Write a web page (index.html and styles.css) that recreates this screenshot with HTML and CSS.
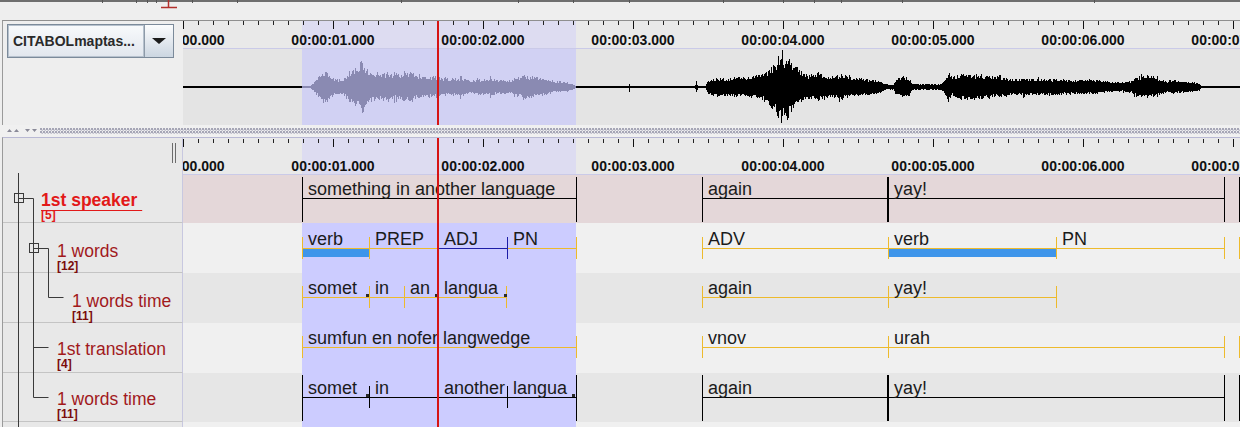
FILE: index.html
```html
<!DOCTYPE html>
<html lang="en">
<head>
<meta charset="utf-8">
<title>Timeline viewer</title>
<link rel="stylesheet" href="styles.css">
</head>
<body>
<div class="app">
  <div class="topstrip">
    <svg width="1240" height="20" viewBox="0 0 1240 20">
      <path class="topline" d="M0 1H1240"/>
      <path class="topticks" d="M102.5 0V3M136.5 0V3M147.5 0V3M156.5 0V3M192.5 0V3M237.5 0V3M401.5 0V3M518.5 0V3M573.5 0V3M629.5 0V3M723.5 0V3M783.5 0V3M814.5 0V3M841.5 0V3M902.5 0V3M1094.5 0V3"/>
      <path class="topmark" d="M168.5 0V7M161 7.5H177"/>
    </svg>
  </div>

  <section class="wave-panel">
    <div class="wave-side">
      <div class="combo">
        <span class="combo-text">CITABOLmaptas...</span>
        <span class="combo-btn"><i class="tri"></i></span>
      </div>
    </div>
    <div class="wave-main">
      <div class="ruler ruler-top">
        <span class="tl" style="left:0px">00:00:00.000</span>
        <span class="tl" style="left:150px">00:00:01.000</span>
        <span class="tl" style="left:300px">00:00:02.000</span>
        <span class="tl" style="left:450px">00:00:03.000</span>
        <span class="tl" style="left:600px">00:00:04.000</span>
        <span class="tl" style="left:750px">00:00:05.000</span>
        <span class="tl" style="left:900px">00:00:06.000</span>
        <span class="tl" style="left:1050px">00:00:07.000</span>
      </div>
      <div class="wave">
        <svg id="wave" width="1057" height="76" viewBox="0 0 1057 76">
          <rect x="0" y="37" width="119" height="2" fill="#000"/>
          <rect x="119" y="37" width="274" height="2" fill="#8a8ab2"/>
          <rect x="393" y="37" width="664" height="2" fill="#000"/>
          <g id="wave-bars"></g>
        </svg>
      </div>
      <div class="cross cross-top"></div>
    </div>
  </section>

  <div class="splitter">
    <svg class="split-arrows" width="40" height="12" viewBox="0 0 40 12">
      <path d="M7 7L9.5 4L12 7ZM14 7L16.5 4L19 7Z"/>
      <path d="M25 4H30L27.5 7ZM32 4H37L34.5 7Z"/>
    </svg>
    <div class="split-dots"></div>
  </div>

  <section class="tiers">
    <div class="trow thead">
      <div class="tname"><span class="grip"></span></div>
      <div class="track ruler ruler-low">
        <span class="tl" style="left:0px">00:00:00.000</span>
        <span class="tl" style="left:150px">00:00:01.000</span>
        <span class="tl" style="left:300px">00:00:02.000</span>
        <span class="tl" style="left:450px">00:00:03.000</span>
        <span class="tl" style="left:600px">00:00:04.000</span>
        <span class="tl" style="left:750px">00:00:05.000</span>
        <span class="tl" style="left:900px">00:00:06.000</span>
        <span class="tl" style="left:1050px">00:00:07.000</span>
      </div>
    </div>

    <div class="trow r1">
      <div class="tname active lv0"><span class="nm">1st speaker&nbsp;</span><span class="ct">[5]</span></div>
      <div class="track">
        <div class="seg lf rf" style="left:119px;width:275px"><span class="t">something in another language</span></div>
        <div class="seg lf rf" style="left:519px;width:186px"><span class="t">again</span></div>
        <div class="seg lf rf" style="left:705px;width:337px"><span class="t">yay!</span></div>
        <div class="seg lf" style="left:1056px;width:200px"></div>
      </div>
    </div>

    <div class="trow r2">
      <div class="tname lv1"><span class="nm">1 words</span><span class="ct">[12]</span></div>
      <div class="track sel-bg">
        <div class="seg g lt" style="left:119px;width:67px"><span class="bar"></span><span class="t">verb</span></div>
        <div class="seg g lt" style="left:186px;width:69px"><span class="t">PREP</span></div>
        <div class="seg g lt rt" style="left:324px;width:70px"><span class="t">PN</span></div>
        <div class="seg b lt rt" style="left:255px;width:70px"><span class="t">ADJ</span></div>
        <div class="seg g lt" style="left:519px;width:186px"><span class="t">ADV</span></div>
        <div class="seg g lt" style="left:705px;width:168px"><span class="bar"></span><span class="t">verb</span></div>
        <div class="seg g lt rt" style="left:873px;width:169px"><span class="t">PN</span></div>
        <div class="seg g lt" style="left:1056px;width:200px"></div>
      </div>
    </div>

    <div class="trow r3">
      <div class="tname lv2"><span class="nm">1 words time</span><span class="ct">[11]</span></div>
      <div class="track sel-bg">
        <div class="seg g lt" style="left:119px;width:67px"><span class="t">somet</span></div>
        <div class="seg g lt" style="left:186px;width:35px"><span class="t">in</span></div>
        <div class="seg g lt" style="left:221px;width:34px"><span class="t">an</span></div>
        <div class="seg g lt rt" style="left:255px;width:69px"><span class="t">langua</span></div>
        <span class="sq" style="left:183px"></span>
        <span class="sq" style="left:252px"></span>
        <span class="sq" style="left:321px"></span>
        <div class="seg g lt" style="left:519px;width:186px"><span class="t">again</span></div>
        <div class="seg g lt rt" style="left:705px;width:169px"><span class="t">yay!</span></div>
      </div>
    </div>

    <div class="trow r4">
      <div class="tname lv1"><span class="nm">1st translation</span><span class="ct">[4]</span></div>
      <div class="track sel-bg">
        <div class="seg g lt rt" style="left:119px;width:275px"><span class="t">sumfun en nofer langwedge</span></div>
        <div class="seg g lt" style="left:519px;width:186px"><span class="t">vnov</span></div>
        <div class="seg g lt rt" style="left:705px;width:337px"><span class="t">urah</span></div>
        <div class="seg g lt" style="left:1056px;width:200px"></div>
      </div>
    </div>

    <div class="trow r5">
      <div class="tname lv1"><span class="nm">1 words time</span><span class="ct">[11]</span></div>
      <div class="track sel-bg">
        <div class="seg lf" style="left:119px;width:67px"><span class="t">somet</span></div>
        <div class="seg lt" style="left:186px;width:69px"><span class="t">in</span></div>
        <div class="seg lt" style="left:255px;width:69px"><span class="t">another</span></div>
        <div class="seg lt rf" style="left:324px;width:70px"><span class="t">langua</span></div>
        <span class="sq" style="left:183px"></span>
        <span class="sq" style="left:389px"></span>
        <div class="seg lf rf" style="left:519px;width:186px"><span class="t">again</span></div>
        <div class="seg lf rf" style="left:705px;width:337px"><span class="t">yay!</span></div>
        <div class="seg lf" style="left:1056px;width:200px"></div>
      </div>
    </div>

    <div class="trow fill">
      <div class="tname"></div>
      <div class="track sel-bg"></div>
    </div>

    <svg class="tree" width="180" height="289" viewBox="3 138 180 289">
      <path d="M18.5 173V427M18.5 198.5H33.5M33.5 198.5V397.5H48.5M33.5 347.5H48.5M33.5 248.5H48.5V297.5H63.5"/>
      <rect x="14.5" y="193.5" width="9" height="9"/>
      <rect x="29.5" y="243.5" width="9" height="9"/>
    </svg>
    <div class="cross cross-low"></div>
  </section>
</div>
<script src="script.js"></script>
</body>
</html>
```

FILE: styles.css
```css
:root {
  --sl: 119px;
  --sr: 393px;
}

* { box-sizing: border-box; }

html, body { margin: 0; padding: 0; }

body {
  width: 1240px;
  height: 427px;
  overflow: hidden;
  background: #eeeeee;
  font-family: "Liberation Sans", Arial, sans-serif;
  color: #111;
}

.app { display: flex; flex-direction: column; height: 427px; }

/* ---------- top strip ---------- */
.topstrip { height: 20px; flex: none; }
.topstrip svg { display: block; }
.topline { stroke: #6e6e6e; stroke-width: 2; fill: none; }
.topticks { stroke: #555; stroke-width: 1; fill: none; }
.topmark { stroke: #b3302c; stroke-width: 1.5; fill: none; }

/* ---------- waveform panel ---------- */
.wave-panel {
  flex: none;
  display: flex;
  height: 105px;
  margin-left: 2px;
  border-top: 1px solid #8f8f8f;
  border-left: 1px solid #9a9a9a;
}

.wave-side {
  width: 180px;
  flex: none;
  padding: 3px 0 0 4px;
  background: #eeeeee;
}

.combo {
  display: flex;
  width: 167px;
  height: 34px;
  border: 1px solid #7b8a9a;
  background: #dfe6ee;
}

.combo-text {
  flex: 1;
  display: flex;
  align-items: center;
  padding-left: 4px;
  border: 1px solid #b6c1cd;
  background: linear-gradient(#f7f9fb, #e2e7ee);
  font-weight: bold;
  font-size: 14px;
  color: #2a2a2a;
  white-space: nowrap;
  overflow: hidden;
}

.combo-btn {
  width: 29px;
  flex: none;
  display: flex;
  align-items: center;
  justify-content: center;
  border-left: 1px solid #8d9aa8;
  background: linear-gradient(#fbfcfd, #ccd6e1);
}

.tri {
  width: 0;
  height: 0;
  border-left: 7px solid transparent;
  border-right: 7px solid transparent;
  border-top: 6px solid #1c1c1c;
}

.wave-main {
  flex: 1;
  position: relative;
  display: flex;
  flex-direction: column;
  overflow: hidden;
}

/* ---------- rulers ---------- */
.ruler {
  position: relative;
  overflow: hidden;
  background-color: #e9e9e9;
  background-image:
    repeating-linear-gradient(90deg, #111 0 1px, transparent 1px 150px),
    repeating-linear-gradient(90deg, #222 0 1px, transparent 1px 15px),
    linear-gradient(90deg, transparent var(--sl), #dddcf1 var(--sl), #dddcf1 var(--sr), transparent var(--sr));
  background-size: 100% 8px, 100% 4px, 100% 100%;
  background-repeat: no-repeat;
}

.ruler-top {
  height: 28px;
  flex: none;
  border-bottom: 1px solid #cacae8;
  background-position: 0 0, 0 0, 0 0;
}

.ruler-low {
  border-bottom: 1px solid #cacae8;
  background-position: 0 1px, 0 1px, 0 0;
}

.tl {
  position: absolute;
  top: 11px;
  transform: translateX(-50%);
  font-weight: bold;
  font-size: 14px;
  line-height: 16px;
  color: #111;
  white-space: nowrap;
}

.ruler-low .tl { top: 20px; }

/* ---------- waveform ---------- */
.wave {
  flex: 1;
  background:
    linear-gradient(90deg, transparent var(--sl), #d1d1f3 var(--sl), #d1d1f3 var(--sr), transparent var(--sr)),
    #e4e4e4;
}

.wave svg { display: block; }
.wb-sel { stroke: #8a8ab2; stroke-width: 1; fill: none; }
.wb-out { stroke: #000; stroke-width: 1; fill: none; }

.cross {
  position: absolute;
  top: 0;
  bottom: 0;
  width: 2px;
  background: #d61414;
  z-index: 10;
}

.cross-top { left: 254px; }
.cross-low { left: 434px; }

/* ---------- splitter ---------- */
.splitter {
  flex: none;
  height: 12px;
  display: flex;
  align-items: center;
  background: #f0f0f0;
}

.split-arrows { display: block; flex: none; fill: #8a8a98; }

.split-dots {
  flex: 1;
  height: 6px;
  background-image:
    radial-gradient(circle at 1px 1px, #a6a6b6 0.8px, transparent 1.2px),
    radial-gradient(circle at 2.5px 2.5px, #c2c2ce 0.8px, transparent 1.2px);
  background-size: 3px 3px, 3px 3px;
}

/* ---------- tiers ---------- */
.tiers {
  position: relative;
  flex: none;
  height: 290px;
  margin-left: 2px;
  display: flex;
  flex-direction: column;
  border-top: 1px solid #b9b9d4;
  border-left: 1px solid #9a9a9a;
}

.trow { display: flex; flex: none; }
.thead { height: 37px; }
.r1 { height: 48px; --ly: 23px; }
.r2 { height: 50px; --ly: 25px; }
.r3 { height: 50px; --ly: 24px; }
.r4 { height: 50px; --ly: 24px; }
.r5 { height: 49px; --ly: 24px; }
.fill { flex: 1; }

.tname {
  width: 180px;
  flex: none;
  display: flex;
  flex-direction: column;
  align-items: flex-start;
  padding-top: 17px;
  background: #e8e8e8;
  border-right: 1px solid #c8c8e0;
  border-bottom: 1px solid #c4c4c4;
}

.r1 .tname { padding-top: 16px; }

.thead .tname {
  flex-direction: row;
  justify-content: flex-end;
  padding: 5px 6px 0 0;
  border-bottom: none;
}

.fill .tname { border-bottom: none; }

.grip {
  width: 4px;
  height: 20px;
  border-left: 1px solid #6c6c6c;
  border-right: 1px solid #6c6c6c;
}

.lv0 { padding-left: 38px; }
.lv1 { padding-left: 54px; }
.lv2 { padding-left: 69px; }
.r2 .tname, .r3 .tname { padding-top: 19px; }

.nm {
  font-size: 17.5px;
  line-height: 18px;
  color: #a1191c;
  white-space: nowrap;
}

.ct {
  font-size: 12px;
  line-height: 13px;
  font-weight: bold;
  color: #7b0c0c;
}

.active .nm {
  font-weight: bold;
  color: #e21919;
  text-decoration: underline;
  text-decoration-thickness: 1px;
  text-underline-offset: 4px;
}

.active .ct { color: #e21919; }

.track {
  flex: 1;
  position: relative;
  overflow: hidden;
}

.r1 .track { background: #e4d7d9; }
.r2 .track, .r4 .track, .fill .track { background-color: #f0f0f0; }
.r3 .track, .r5 .track { background-color: #e6e6e6; }

.sel-bg {
  background-image: linear-gradient(90deg, transparent var(--sl), #ccccff var(--sl), #ccccff var(--sr), transparent var(--sr));
}

/* annotation segments */
.seg {
  position: absolute;
  top: 0;
  bottom: 0;
  --c: #000;
  background: linear-gradient(var(--c), var(--c)) 0 var(--ly) / 100% 1px no-repeat;
}

.seg.g { --c: #edba2c; }
.seg.b { --c: #1d1da6; }

.seg::before, .seg::after {
  position: absolute;
  width: 1px;
  background: var(--c);
}

.seg.lf::before, .seg.lt::before { content: ""; left: 0; }
.seg.rf::after, .seg.rt::after { content: ""; right: 0; }

.seg.lf::before, .seg.rf::after { top: 2px; bottom: 1px; }
.seg.lt::before, .seg.rt::after { top: calc(var(--ly) - 11px); height: 22px; }

.seg .t {
  position: absolute;
  left: 6px;
  top: calc(var(--ly) - 19px);
  font-size: 18px;
  line-height: 20px;
  color: #1b1b1b;
  white-space: nowrap;
}

.seg .bar {
  position: absolute;
  left: 1px;
  right: 0;
  top: calc(var(--ly) + 1px);
  height: 8px;
  background: #3e95ea;
}

.sq {
  position: absolute;
  width: 3px;
  height: 3px;
  top: calc(var(--ly) - 3px);
  background: #2a2a2a;
}

.tree {
  position: absolute;
  left: 0;
  top: 0;
  z-index: 3;
  pointer-events: none;
}

.tree path, .tree rect {
  fill: none;
  stroke: #3a3a3a;
  stroke-width: 1;
}
```

FILE: script.js
```js
(function () {
  var g = document.getElementById('wave-bars');
  if (!g) return;
  var seed = 987654321;
  function rnd() {
    seed |= 0; seed = seed + 0x6D2B79F5 | 0;
    var t = Math.imul(seed ^ seed >>> 15, 1 | seed);
    t = t + Math.imul(t ^ t >>> 7, 61 | t) ^ t;
    return ((t ^ t >>> 14) >>> 0) / 4294967296;
  }
  var X0 = 183;
  var groups = [
    { c: 'wb-sel', pts: [[310,0],[313,3],[317,8],[322,15],[326,16],[331,10],[337,7],[344,8],[349,15],[354,19],[359,22],[362,28],[365,20],[370,15],[378,13],[388,13],[398,12],[406,14],[411,16],[416,11],[425,10],[435,10],[442,8],[452,8],[462,9],[470,6],[480,7],[490,8],[500,6],[510,6],[518,9],[525,11],[535,10],[545,7],[555,5],[565,4],[572,2],[575,0]] },
    { c: 'wb-out', pts: [[628,0],[629,3],[630,0]] },
    { c: 'wb-out', pts: [[694,0],[696,4],[698,0]] },
    { c: 'wb-out', pts: [[705,0],[708,7],[716,9],[726,8],[736,10],[746,9],[756,11],[764,13],[770,19],[776,25],[782,30],[788,28],[794,22],[800,16],[808,12],[818,13],[828,10],[838,11],[843,13],[848,9],[858,9],[868,7],[878,6],[884,3],[888,1.5],[893,2],[897,8],[903,11],[909,8],[912,2],[925,2],[940,2],[944,5],[948,15],[952,9],[958,12],[968,13],[978,12],[988,11],[998,10],[1006,8],[1016,7],[1026,8],[1036,7],[1046,8],[1056,7],[1066,7],[1076,6],[1086,7],[1096,6],[1106,5],[1116,4],[1126,4],[1132,6],[1137,10],[1145,11],[1153,10],[1160,7],[1166,5],[1180,5],[1192,4],[1199,3],[1201,0]] }
  ];
  function amp(pts, x) {
    for (var i = 0; i < pts.length - 1; i++) {
      var a = pts[i], b = pts[i + 1];
      if (x >= a[0] && x <= b[0]) {
        return a[1] + (b[1] - a[1]) * (x - a[0]) / (b[0] - a[0]);
      }
    }
    return 0;
  }
  var ns = 'http://www.w3.org/2000/svg';
  groups.forEach(function (gr) {
    var d = '';
    var x0 = gr.pts[0][0], x1 = gr.pts[gr.pts.length - 1][0];
    for (var x = x0; x <= x1; x++) {
      var a = amp(gr.pts, x);
      if (a <= 0.3) continue;
      var k = rnd() > 0.9 ? 1.25 : 1;
      var up = a * (0.6 + 0.4 * rnd()) * k;
      var dn = a * (0.6 + 0.4 * rnd()) * k;
      var y1 = Math.round(37 - up);
      var y2 = Math.round(39 + dn);
      d += 'M' + (x - X0 + 0.5) + ' ' + y1 + 'V' + y2;
    }
    var p = document.createElementNS(ns, 'path');
    p.setAttribute('d', d);
    p.setAttribute('class', gr.c);
    g.appendChild(p);
  });
})();
```
